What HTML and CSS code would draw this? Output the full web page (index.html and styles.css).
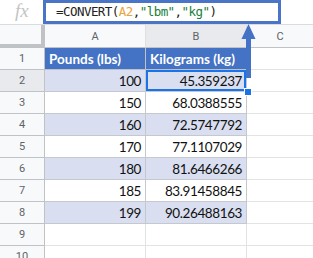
FILE: index.html
```html
<!DOCTYPE html>
<html>
<head>
<meta charset="utf-8">
<link rel="stylesheet" href="styles.css">
</head>
<body>
<div class="sheet">
  <div class="fbar">
    <div class="fx">fx</div>
    <div class="fbox"><span class="fn">=CONVERT(</span><span class="ref">A2</span><span class="fn">,</span><span class="str">"lbm"</span><span class="fn">,</span><span class="str">"kg"</span><span class="fn">)</span></div>
  </div>
  <div class="grid">
    <div class="corner"></div><div class="ch">A</div><div class="ch sel">B</div><div class="ch last">C</div>

    <div class="rn">1</div><div class="c head">Pounds (lbs)</div><div class="c head">Kilograms (kg)</div><div class="c e"></div>
    <div class="rn sel">2</div><div class="c n band">100</div><div class="c n band active">45.359237</div><div class="c e"></div>
    <div class="rn">3</div><div class="c n">150</div><div class="c n">68.0388555</div><div class="c e"></div>
    <div class="rn">4</div><div class="c n band">160</div><div class="c n band">72.5747792</div><div class="c e"></div>
    <div class="rn">5</div><div class="c n">170</div><div class="c n">77.1107029</div><div class="c e"></div>
    <div class="rn">6</div><div class="c n band">180</div><div class="c n band">81.6466266</div><div class="c e"></div>
    <div class="rn">7</div><div class="c n">185</div><div class="c n">83.91458845</div><div class="c e"></div>
    <div class="rn">8</div><div class="c n band">199</div><div class="c n band">90.26488163</div><div class="c e"></div>
    <div class="rn">9</div><div class="c"></div><div class="c"></div><div class="c e"></div>
    <div class="rn">10</div><div class="c"></div><div class="c"></div><div class="c e"></div>
  </div>
  <div class="handle"></div>
  <svg class="arrow" width="16" height="56" viewBox="0 0 16 56">
    <polygon points="7.5,0 0.5,15 14.5,15" fill="#4472c4"/>
    <rect x="5" y="14" width="5" height="40" fill="#4472c4"/>
  </svg>
</div>
</body>
</html>
```
FILE: styles.css
```css
html, body {
  margin: 0;
  padding: 0;
  background: #fff;
}
.sheet {
  position: relative;
  width: 313px;
  height: 258px;
  overflow: hidden;
  font-family: "Lato", "Open Sans", sans-serif;
}
.fbar {
  display: flex;
  height: 24px;
  border-bottom: 1px solid #dadce0;
  background: #fff;
}
.fx {
  width: 43px;
  box-sizing: border-box;
  padding-left: 15px;
  font-family: "Liberation Serif", serif;
  font-style: italic;
  font-size: 19px;
  line-height: 22px;
  color: #c4c4c4;
}
.fbox {
  width: 238px;
  height: 24px;
  box-sizing: border-box;
  border: 3px solid #4a74c6;
  padding-left: 10px;
  font-family: "DejaVu Sans Mono", monospace;
  font-size: 12.5px;
  letter-spacing: -0.55px;
  line-height: 18px;
  color: #222;
  white-space: nowrap;
}
.ref { color: #e8a33c; }
.str { color: #188038; }
.grid {
  display: grid;
  grid-template-columns: 45px 101px 101px 1fr;
  grid-template-rows: 23px repeat(10, 22px);
}
.corner {
  background: #f8f9fa;
  border-right: 4px solid #c0c3c6;
  border-bottom: 4px solid #c0c3c6;
  box-sizing: border-box;
}
.ch {
  background: #f8f9fa;
  border-right: 1px solid #e0e0e0;
  border-bottom: 1px solid #c0c3c6;
  box-sizing: border-box;
  font-family: "Roboto", sans-serif;
  font-size: 11px;
  color: #5f6368;
  display: flex;
  align-items: center;
  justify-content: center;
}
.ch.sel { background: #e8eaed; }
.ch.last { border-right: none; }
.rn {
  background: #f8f9fa;
  border-right: 1px solid #c0c3c6;
  border-bottom: 1px solid #c0c3c6;
  box-sizing: border-box;
  font-family: "Roboto", sans-serif;
  font-size: 11px;
  color: #5f6368;
  display: flex;
  align-items: center;
  justify-content: center;
}
.rn.sel { background: #e8eaed; }
.c {
  border-right: 1px solid #e2e3e3;
  border-bottom: 1px solid #e2e3e3;
  box-sizing: border-box;
  font-size: 13.5px;
  color: #111;
  display: flex;
  align-items: center;
  padding: 0 4px;
  white-space: nowrap;
}
.c.e { border-right: none; }
.head {
  background: #4472c4;
  color: #fff;
  font-weight: bold;
  border-color: #c0c3c6;
}
.n {
  justify-content: flex-end;
  padding-right: 4px;
  border-color: #c5c8cc;
  font-size: 13.5px;
  letter-spacing: -0.4px;
}
.band { background: #d9dff0; }
.active {
  box-shadow: inset 0 0 0 2px #1a73e8;
}
.handle {
  position: absolute;
  left: 244px;
  top: 88px;
  width: 6px;
  height: 6px;
  background: #1a73e8;
  border: 1px solid #fff;
  box-sizing: content-box;
}
.arrow {
  position: absolute;
  left: 241px;
  top: 24px;
}
```
